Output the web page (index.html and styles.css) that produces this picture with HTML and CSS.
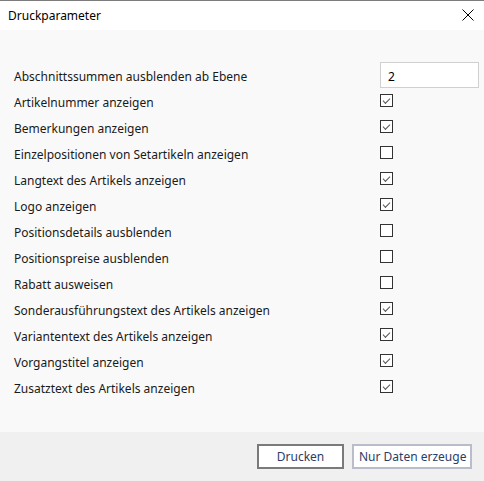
FILE: index.html
```html
<!DOCTYPE html>
<html lang="de">
<head>
<meta charset="utf-8">
<title>Druckparameter</title>
<link rel="stylesheet" href="styles.css">
</head>
<body>
<div class="dialog">
  <div class="titlebar">
    <span class="title">Druckparameter</span>
    <svg class="close" width="12" height="12" viewBox="0 0 12 12"><path d="M0.5 0.5 L11.5 11.5 M11.5 0.5 L0.5 11.5" stroke="#000" stroke-width="1" fill="none"/></svg>
  </div>
  <div class="content">
    <div class="row"><span class="label">Abschnittssummen ausblenden ab Ebene</span><input class="num" type="text" value="2"></div>
    <div class="row"><span class="label">Artikelnummer anzeigen</span><span class="cb checked"></span></div>
    <div class="row"><span class="label">Bemerkungen anzeigen</span><span class="cb checked"></span></div>
    <div class="row"><span class="label">Einzelpositionen von Setartikeln anzeigen</span><span class="cb"></span></div>
    <div class="row"><span class="label">Langtext des Artikels anzeigen</span><span class="cb checked"></span></div>
    <div class="row"><span class="label">Logo anzeigen</span><span class="cb checked"></span></div>
    <div class="row"><span class="label">Positionsdetails ausblenden</span><span class="cb"></span></div>
    <div class="row"><span class="label">Positionspreise ausblenden</span><span class="cb"></span></div>
    <div class="row"><span class="label">Rabatt ausweisen</span><span class="cb"></span></div>
    <div class="row"><span class="label">Sonderausführungstext des Artikels anzeigen</span><span class="cb checked"></span></div>
    <div class="row"><span class="label">Variantentext des Artikels anzeigen</span><span class="cb checked"></span></div>
    <div class="row"><span class="label">Vorgangstitel anzeigen</span><span class="cb checked"></span></div>
    <div class="row"><span class="label">Zusatztext des Artikels anzeigen</span><span class="cb checked"></span></div>
  </div>
  <div class="footer">
    <button class="btn default">Drucken</button>
    <button class="btn second">Nur Daten erzeuge</button>
  </div>
</div>
</body>
</html>
```

FILE: styles.css
```css
html, body {
  margin: 0;
  padding: 0;
}
body {
  width: 484px;
  height: 481px;
  overflow: hidden;
  font-family: "Noto Sans", "Open Sans", sans-serif;
  font-size: 12px;
  color: #1a1a1a;
}
.dialog {
  display: flex;
  flex-direction: column;
  height: 481px;
  background: #f9f9f9;
}
.titlebar {
  height: 29px;
  border-top: 1px solid #7d7d7d;
  background: #ffffff;
  display: flex;
  align-items: center;
  justify-content: space-between;
  padding: 0 10px 0 8px;
}
.title {
  font-size: 12px;
  color: #000;
  margin-top: -1px;
}
.close {
  margin-top: -1px;
}
.content {
  flex: 1;
  padding: 32px 5px 0 14px;
}
.row {
  height: 26px;
  display: grid;
  grid-template-columns: 366px 1fr;
  align-items: center;
}
.label {
  white-space: nowrap;
  line-height: 16px;
  padding-top: 4px;
}
.num {
  box-sizing: border-box;
  width: 99px;
  height: 26px;
  border: 1px solid #d0d0d0;
  background: #fff;
  font-family: inherit;
  font-size: 12px;
  color: #000;
  padding: 2px 0 0 7px;
  margin: 0;
  outline: none;
}
.cb {
  box-sizing: border-box;
  width: 13px;
  height: 13px;
  border: 1px solid #333;
  background: #fff;
  position: relative;
  margin-top: -1px;
}
.cb.checked::after {
  content: "";
  position: absolute;
  left: 3px;
  top: 1px;
  width: 6px;
  height: 3px;
  border-left: 1px solid #555;
  border-bottom: 1px solid #555;
  transform: translate(-1px, 2px) rotate(-45deg);
  transform-origin: center;
}
.footer {
  height: 49px;
  background: #f0f0f0;
  display: flex;
  justify-content: flex-end;
  align-items: flex-start;
  gap: 8px;
  padding: 12px 12px 0 0;
  box-sizing: border-box;
}
.btn {
  box-sizing: border-box;
  height: 25px;
  background: #fff;
  font-family: inherit;
  font-size: 12px;
  color: #2b3d66;
  padding: 0;
  margin: 0;
  white-space: nowrap;
}
.btn.default {
  width: 87px;
  border: 2px solid #7a7a7a;
}
.btn.second {
  width: 120px;
  border: 2px solid #b8bccb;
  text-align: left;
  padding-left: 5px;
}
```
